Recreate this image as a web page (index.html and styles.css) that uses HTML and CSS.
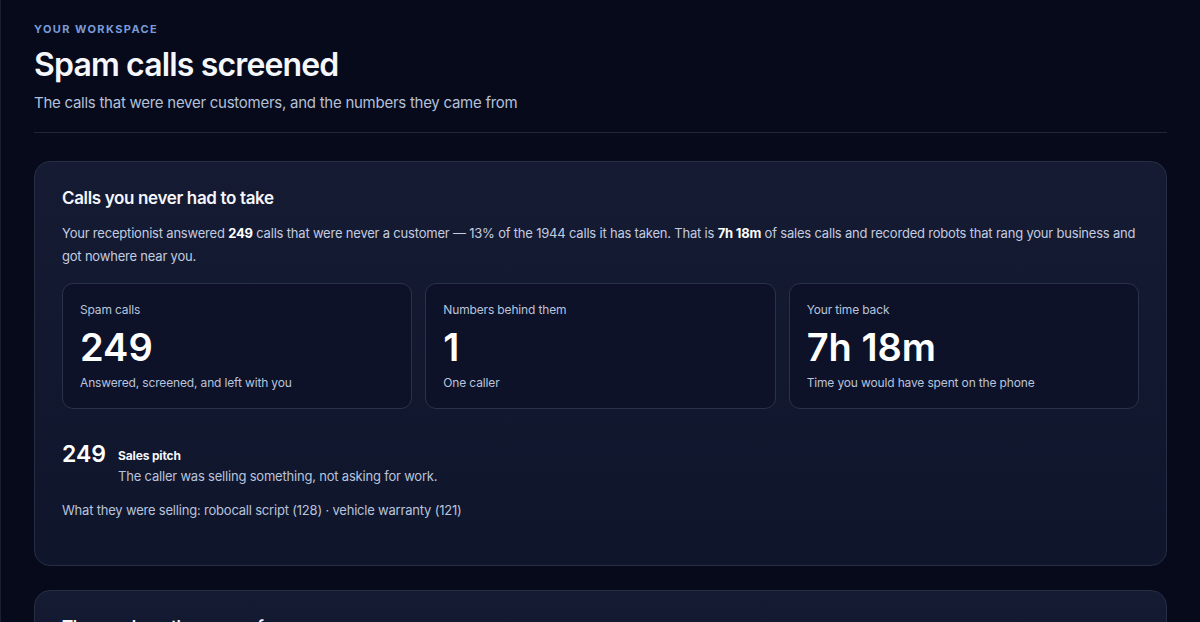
FILE: index.html
```html
<!DOCTYPE html>
<html>
<head>
<meta charset="utf-8">
<link rel="stylesheet" href="styles.css">
</head>
<body>
<div class="page">
  <header class="head">
    <div class="eyebrow">YOUR WORKSPACE</div>
    <h1 class="title">Spam calls screened</h1>
    <p class="subtitle">The calls that were never customers, and the numbers they came from</p>
  </header>
  <div class="divider"></div>
  <div class="cards">
    <section class="card">
      <h2 class="card-title">Calls you never had to take</h2>
      <p class="lead">Your receptionist answered <b>249</b> calls that were never a customer — 13% of the 1944 calls it has taken. That is <b>7h 18m</b> of sales calls and recorded robots that rang your business and got nowhere near you.</p>
      <div class="stats">
        <div class="stat">
          <div class="stat-label">Spam calls</div>
          <div class="stat-value">249</div>
          <div class="stat-sub">Answered, screened, and left with you</div>
        </div>
        <div class="stat">
          <div class="stat-label">Numbers behind them</div>
          <div class="stat-value">1</div>
          <div class="stat-sub">One caller</div>
        </div>
        <div class="stat">
          <div class="stat-label">Your time back</div>
          <div class="stat-value">7h 18m</div>
          <div class="stat-sub">Time you would have spent on the phone</div>
        </div>
      </div>
      <div class="reason">
        <div class="reason-count">249</div>
        <div class="reason-body">
          <div class="reason-name">Sales pitch</div>
          <div class="reason-desc">The caller was selling something, not asking for work.</div>
        </div>
      </div>
      <p class="selling">What they were selling: robocall script (128) · vehicle warranty (121)</p>
    </section>
    <section class="card">
      <h2 class="card-title">The numbers they came from</h2>
    </section>
  </div>
</div>
</body>
</html>
```
FILE: styles.css
```css
* { box-sizing: border-box; }
html, body {
  margin: 0;
  background: #060a1b;
  color: #ffffff;
  font-family: Inter, "Noto Sans", sans-serif;
}
body { border-left: 1px solid #1a2034; min-height: 622px; }
.page {
  padding: 22px 33px 0 33px;
}
.eyebrow {
  font-size: 11px;
  font-weight: 700;
  letter-spacing: 1.4px;
  color: #7a9ad8;
  line-height: 14px;
}
.title {
  margin: 9px 0 0 0;
  font-size: 32px;
  font-weight: 600;
  letter-spacing: -0.85px;
  line-height: 40px;
  color: #f5f7fb;
}
.subtitle {
  margin: 8px 0 0 0;
  font-size: 15px;
  line-height: 20px;
  letter-spacing: -0.26px;
  color: #b4c0d8;
}
.divider {
  height: 1px;
  background: #20273b;
  margin-top: 19px;
}
.cards {
  margin-top: 28px;
  display: flex;
  flex-direction: column;
  gap: 24px;
}
.card {
  background: linear-gradient(180deg, #151b32 0%, #0f152b 100%);
  border: 1px solid #262d45;
  border-radius: 16px;
  padding: 25px 27px 46px 27px;
}
.card-title {
  margin: 0;
  font-size: 17px;
  font-weight: 600;
  line-height: 22px;
  letter-spacing: -0.35px;
  color: #f4f6fb;
}
.lead {
  margin: 13px 0 0 0;
  font-size: 13px;
  line-height: 23px;
  letter-spacing: -0.2px;
  color: #c3cce0;
}
.lead b { color: #ffffff; font-weight: 700; }
.stats {
  margin-top: 15px;
  display: grid;
  grid-template-columns: 1fr 1fr 1fr;
  gap: 13px;
}
.stat {
  background: #0d1229;
  border: 1px solid #2a3149;
  border-radius: 11px;
  padding: 18px 17px 17px 17px;
}
.stat-label {
  font-size: 12px;
  line-height: 16px;
  letter-spacing: -0.15px;
  color: #b9c4dc;
}
.stat-value {
  margin-top: 7px;
  font-size: 38px;
  font-weight: 600;
  line-height: 44px;
  letter-spacing: 0;
  color: #ffffff;
}
.stat-sub {
  margin-top: 6px;
  font-size: 12px;
  line-height: 16px;
  letter-spacing: -0.15px;
  color: #b9c4dc;
}
.reason {
  margin-top: 32px;
  display: flex;
  gap: 12px;
  align-items: flex-start;
}
.reason-count {
  font-size: 23px;
  font-weight: 600;
  line-height: 26px;
  color: #ffffff;
}
.reason-body { padding-top: 7px; }
.reason-name {
  font-size: 12px;
  font-weight: 700;
  line-height: 16px;
  letter-spacing: -0.15px;
  color: #f4f6fb;
}
.reason-desc {
  margin-top: 3px;
  font-size: 13px;
  line-height: 18px;
  letter-spacing: -0.2px;
  color: #b9c4dc;
}
.selling {
  margin: 16px 0 0 0;
  font-size: 13px;
  line-height: 18px;
  letter-spacing: -0.2px;
  color: #b9c4dc;
}
```
